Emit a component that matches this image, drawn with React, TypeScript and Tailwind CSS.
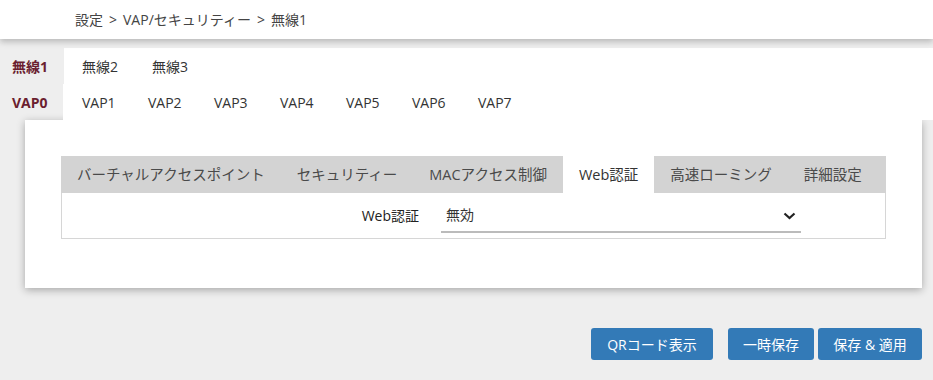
import React from "react";

const font = { fontFamily: '"Open Sans", "Noto Sans CJK JP", sans-serif' };

export default function App() {
  const row1 = ["無線2", "無線3"];
  const row2 = ["VAP1", "VAP2", "VAP3", "VAP4", "VAP5", "VAP6", "VAP7"];
  const inner = ["バーチャルアクセスポイント", "セキュリティー", "MACアクセス制御", "Web認証", "高速ローミング", "詳細設定"];
  return (
    <div className="h-[380px] w-full bg-[#eeeeee] text-[14px] text-[#333] font-['Open_Sans','Noto_Sans_CJK_JP',sans-serif]" style={font}>
      <div className="relative z-10 h-[39px] bg-white shadow-[0_3px_6px_rgba(0,0,0,0.22)] flex items-center pl-[75px] text-[#444]">
        <span>設定</span>
        <span className="mx-[6px]">&gt;</span>
        <span>VAP/セキュリティー</span>
        <span className="mx-[6px]">&gt;</span>
        <span>無線1</span>
      </div>
      <div className="mt-[9px] flex h-[36px]">
        <div className="w-[64px] flex items-center pl-[12px] font-bold text-[#6b1e30]">無線1</div>
        <div className="flex-1 bg-white flex items-center">
          {row1.map((t) => (
            <div key={t} className="w-[70px] pl-[18px]">{t}</div>
          ))}
        </div>
      </div>
      <div className="flex h-[36px]">
        <div className="w-[63px] flex items-center pl-[12px] font-bold text-[#6b1e30]">VAP0</div>
        <div className="flex-1 bg-white flex items-center">
          {row2.map((t) => (
            <div key={t} className="w-[66px] pl-[19px]">{t}</div>
          ))}
        </div>
      </div>
      <div className="ml-[25px] w-[897px] h-[168px] bg-white shadow-[0_2px_8px_rgba(0,0,0,0.3)] pt-[36px] px-[36px]">
        <div className="flex h-[37px] bg-[#d3d3d3] items-stretch text-[14.5px]">
          {inner.map((t) => (
            <div
              key={t}
              className={
                "flex items-center px-[16px] " +
                (t === "Web認証" ? "bg-white text-[#333]" : "text-[#4a4a4a]")
              }
            >
              {t}
            </div>
          ))}
        </div>
        <div className="h-[46px] border border-t-0 border-[#d6d6d6] flex items-center">
          <div className="w-[357px] text-right text-[#222]">Web認証</div>
          <div className="ml-[22px] w-[360px] h-[34px] relative flex items-center border-b-2 border-[#bbbbbb]">
            <span className="pl-[5px] text-[#333]">無効</span>
            <svg className="absolute right-[5px] top-[13px]" width="13" height="8" viewBox="0 0 13 8">
              <path d="M1.5 1.5 L6.5 6 L11.5 1.5" fill="none" stroke="#222" strokeWidth="2.2" />
            </svg>
          </div>
        </div>
      </div>
      <div className="mt-[40px] flex justify-end pr-[11px]">
        <button className="h-[32px] w-[122px] rounded-[3px] bg-[#337ab7] text-white">QRコード表示</button>
        <button className="ml-[15px] h-[32px] w-[86px] rounded-[3px] bg-[#337ab7] text-white">一時保存</button>
        <button className="ml-[4px] h-[32px] w-[104px] rounded-[3px] bg-[#337ab7] text-white">保存 &amp; 適用</button>
      </div>
    </div>
  );
}
